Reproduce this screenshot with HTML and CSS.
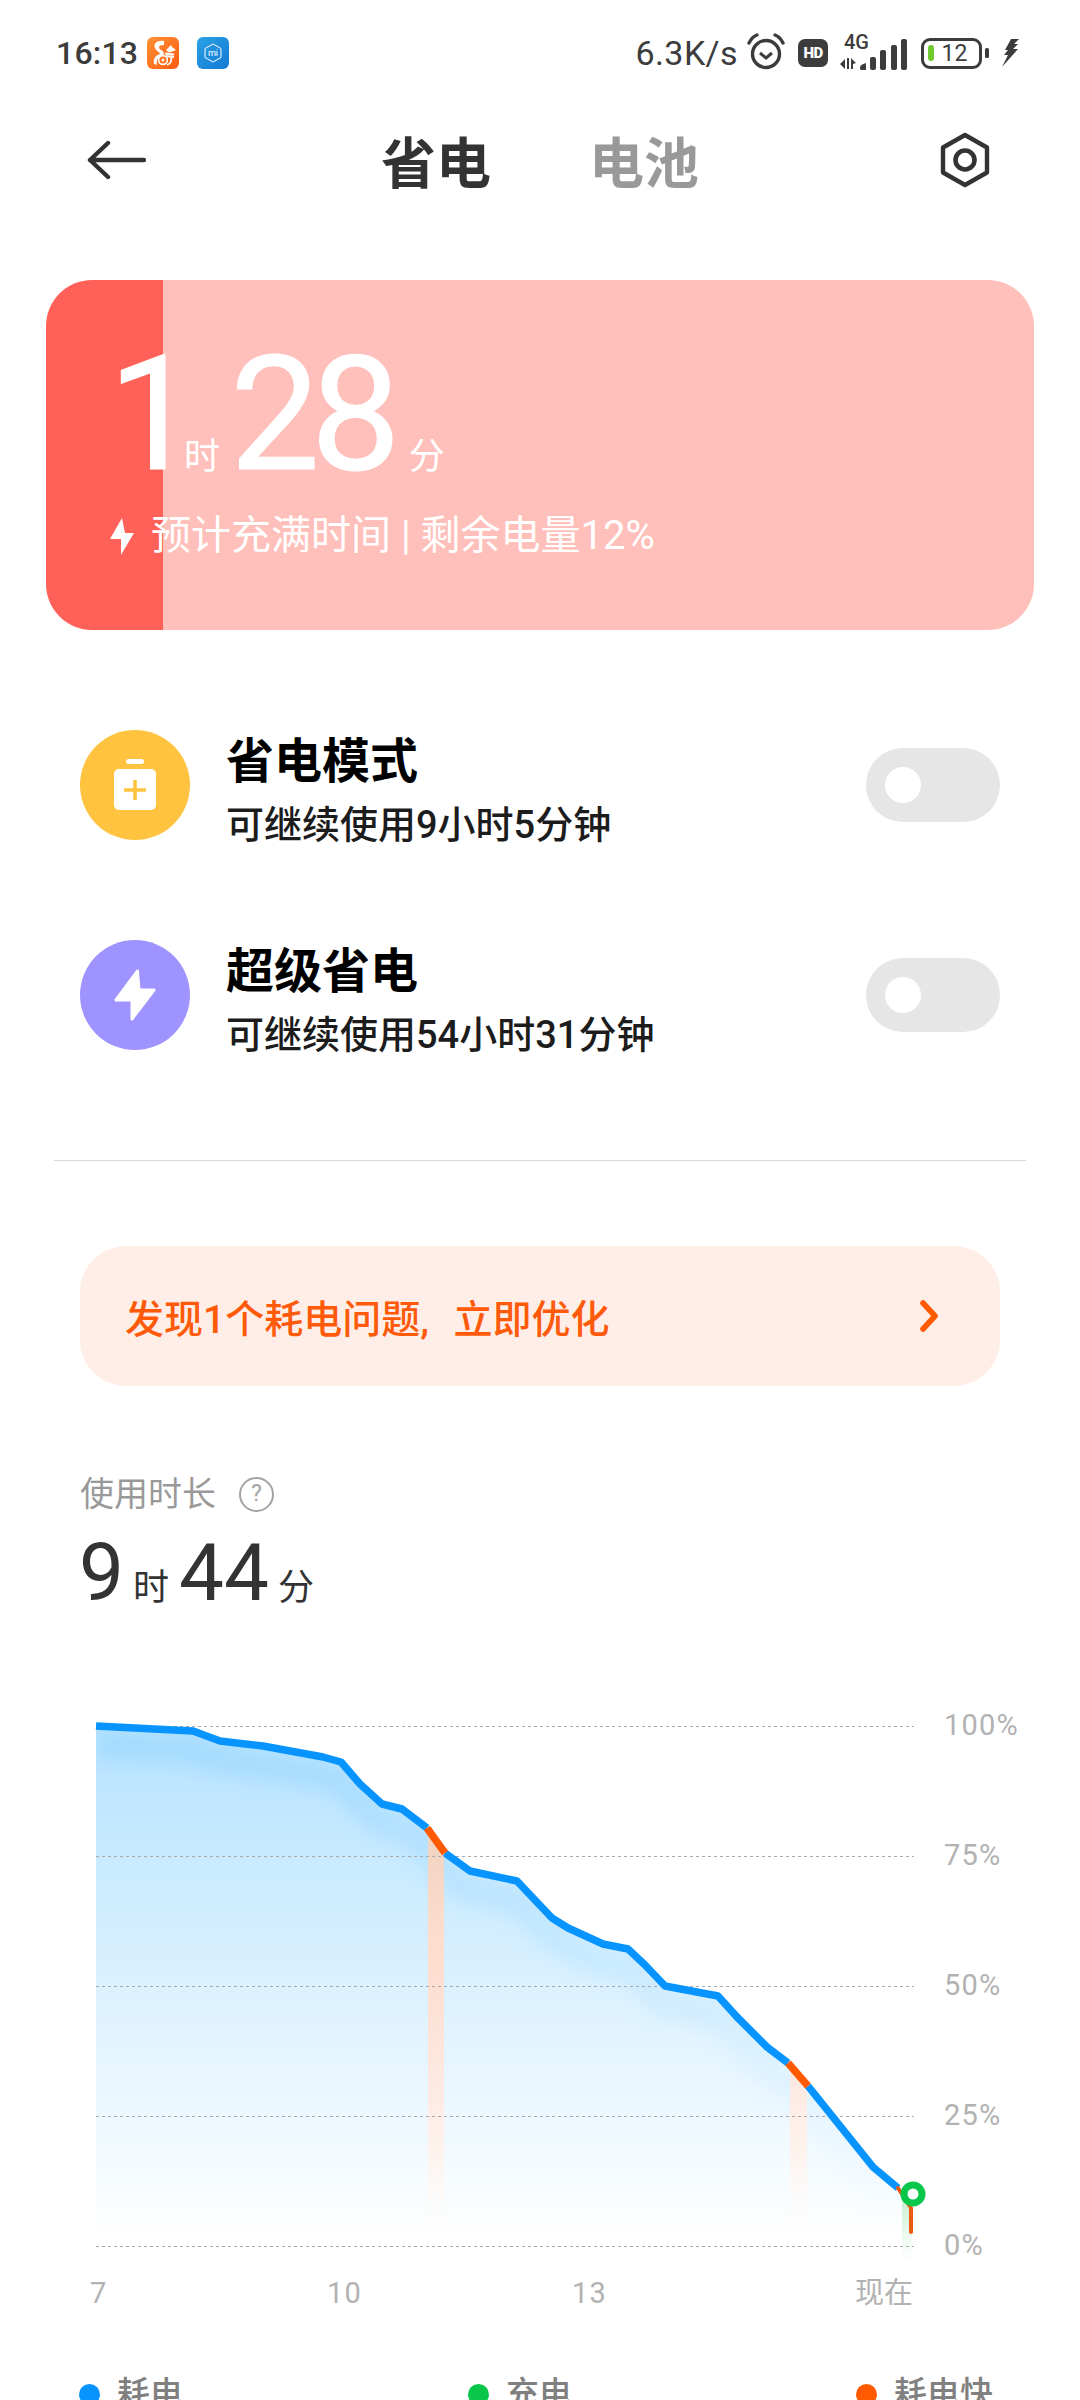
FILE: index.html
```html
<!DOCTYPE html>
<html lang="zh-CN">
<head>
<meta charset="utf-8">
<title>省电</title>
<link rel="stylesheet" href="styles.css">
</head>
<body>
<div class="status">
  <div class="status-left">
    <span class="clock">16:13</span>
    <svg class="app-icon" viewBox="0 0 32 32">
      <defs><linearGradient id="uc" x1="0" y1="0" x2="1" y2="1"><stop offset="0" stop-color="#ff9236"/><stop offset="1" stop-color="#ff5a10"/></linearGradient></defs>
      <rect width="32" height="32" rx="6" fill="url(#uc)"/>
      <path d="M17 4C10 3 6 7 8 11c1 3 5 4 5 6-4 1-7 4-6 10l3 1c-1-5 1-8 5-9 3-1 2-5-1-6-3-2-3-5 3-5z" fill="#fff"/>
      <circle cx="16" cy="23" r="4.4" fill="none" stroke="#fff" stroke-width="1.6"/>
      <circle cx="16" cy="23" r="1.5" fill="#fff"/>
      <path d="M19 13l5-5 1 2 4 3-5 2-2 .5z" fill="#fff"/>
      <path d="M18 16.5l9 1M19 19l8 1M20 28c4-1 5-5 4-8" fill="none" stroke="#fff" stroke-width="1.8"/>
    </svg>
    <svg class="app-icon app-gap" viewBox="0 0 32 32">
      <defs><linearGradient id="mi" x1="0" y1="0" x2="1" y2="1"><stop offset="0" stop-color="#29a2e4"/><stop offset="1" stop-color="#1478d4"/></linearGradient></defs>
      <rect width="32" height="32" rx="6" fill="url(#mi)"/>
      <polygon points="16,7 24,11.5 24,20.5 16,25 8,20.5 8,11.5" fill="none" stroke="#fff" stroke-width="1"/>
      <text class="mi-text" x="16" y="19">mi</text>
    </svg>
  </div>
  <div class="status-right">
    <span class="speed">6.3K/s</span>
    <svg class="alarm" width="40" height="38" viewBox="0 0 40 38">
      <circle cx="20" cy="21" r="13.5" fill="none" stroke="#3c3c3c" stroke-width="3.4"/>
      <path d="M14 20l6 5 6-5" fill="none" stroke="#3c3c3c" stroke-width="3"/>
      <path d="M3 10C5 6 8 3 11 2M37 10C35 6 32 3 29 2" fill="none" stroke="#3c3c3c" stroke-width="3.4" stroke-linecap="round"/>
    </svg>
    <span class="hd">HD</span>
    <span class="net">
      <span class="net-g">4G</span>
      <svg class="net-bars" width="67" height="31" viewBox="0 0 67 31">
        <path d="M0 25l5-5v10zM7 19h2v11H7zM11 19l5 5-3 1v5h-2z" fill="#3c3c3c"/>
        <path d="M20 29c0-3 3-4 6-5v7h-4c-1 0-2 0-2-2z" fill="#3c3c3c"/>
        <rect x="30" y="18" width="6" height="13" rx="2" fill="#3c3c3c"/>
        <rect x="40" y="11" width="6" height="20" rx="2" fill="#3c3c3c"/>
        <rect x="51" y="6" width="6" height="25" rx="2" fill="#3c3c3c"/>
        <rect x="61" y="0" width="6" height="31" rx="2" fill="#3c3c3c"/>
      </svg>
    </span>
    <span class="batt"><span class="batt-level"></span><span class="batt-num">12</span></span>
    <span class="batt-nub"></span>
    <svg class="charge" width="17" height="28" viewBox="0 0 17 28">
      <path d="M9 0h8l-5 5h4l-5 5h5L0 28l6-12H2l4-5H3z" fill="#3c3c3c"/>
    </svg>
  </div>
</div>

<div class="header">
  <svg class="back" width="60" height="40" viewBox="0 0 60 40"><path d="M21 3L3 20l18 17M3 20h54" fill="none" stroke="#333" stroke-width="4.4" stroke-linecap="round" stroke-linejoin="round"/></svg>
  <div class="tabs"><span class="tab tab-on">省电</span><span class="tab">电池</span></div>
  <svg class="gear" width="50" height="56" viewBox="0 0 50 56"><polygon points="25,3 47,15.5 47,40.5 25,53 3,40.5 3,15.5" fill="none" stroke="#333" stroke-width="4.4" stroke-linejoin="round"/><circle cx="25" cy="28" r="9.5" fill="none" stroke="#333" stroke-width="4.6"/></svg>
</div>

<section class="hero">
  <div class="hero-time">
    <span class="hero-num hero-one">1</span><span class="hero-unit">时</span><span class="hero-num">28</span><span class="hero-unit hero-unit-last">分</span>
  </div>
  <div class="hero-info">
    <svg width="24" height="37" viewBox="0 0 24 37"><polygon points="12,0 0,21 11,21 11,37 24,15 15,15" fill="#fff"/></svg>
    <span>预计充满时间 | 剩余电量12%</span>
  </div>
</section>

<section class="modes">
  <div class="mode">
    <div class="mode-icon mode-yellow">
      <svg width="110" height="110" viewBox="0 0 110 110">
        <rect x="46" y="29" width="18" height="5" rx="2.5" fill="#fff"/>
        <rect x="34" y="39" width="42" height="41" rx="5" fill="#fff"/>
        <path d="M55 50v20M44 60h22" stroke="#ffc340" stroke-width="3.6"/>
      </svg>
    </div>
    <div class="mode-text">
      <div class="mode-title">省电模式</div>
      <div class="mode-sub">可继续使用9小时5分钟</div>
    </div>
    <div class="toggle"><span class="knob"></span></div>
  </div>
  <div class="mode">
    <div class="mode-icon mode-purple">
      <svg width="110" height="110" viewBox="0 0 110 110">
        <polygon points="57.5,31 36,60 52,60 52,79 74,50 59,50" fill="#fff" stroke="#fff" stroke-width="3" stroke-linejoin="round"/>
      </svg>
    </div>
    <div class="mode-text">
      <div class="mode-title">超级省电</div>
      <div class="mode-sub">可继续使用54小时31分钟</div>
    </div>
    <div class="toggle"><span class="knob"></span></div>
  </div>
</section>

<div class="divider"></div>

<div class="banner">
  <span class="banner-text">发现1个耗电问题, 立即优化</span>
  <svg width="22" height="32" viewBox="0 0 22 32"><path d="M4 3l12 13L4 29" fill="none" stroke="#ff5a00" stroke-width="5.6" stroke-linecap="round" stroke-linejoin="round"/></svg>
</div>

<section class="usage">
  <div class="usage-label"><span>使用时长</span><span class="help">?</span></div>
  <div class="usage-time">
    <span class="usage-num">9</span><span class="usage-unit">时</span><span class="usage-num">44</span><span class="usage-unit">分</span>
  </div>
</section>

<svg class="chart" width="1080" height="640" viewBox="0 1700 1080 640">
  <defs>
    <linearGradient id="areaFill" gradientUnits="userSpaceOnUse" x1="0" y1="1726" x2="0" y2="2240">
      <stop offset="0" stop-color="#b6e3ff"/><stop offset="1" stop-color="#fff"/>
    </linearGradient>
    <linearGradient id="bandFill" gradientUnits="userSpaceOnUse" x1="0" y1="1726" x2="0" y2="2240">
      <stop offset="0" stop-color="#7ccbfb" stop-opacity=".38"/><stop offset="1" stop-color="#9ed8fd" stop-opacity="0"/>
    </linearGradient>
    <linearGradient id="peakFill" gradientUnits="userSpaceOnUse" x1="0" y1="1840" x2="0" y2="2240">
      <stop offset="0" stop-color="#f8d2bb" stop-opacity=".9"/>
      <stop offset=".25" stop-color="#ffdcca" stop-opacity=".95"/>
      <stop offset=".5" stop-color="#ffe3d7" stop-opacity=".95"/>
      <stop offset=".8" stop-color="#fff3ed" stop-opacity=".9"/>
      <stop offset="1" stop-color="#fff" stop-opacity="0"/>
    </linearGradient>
    <linearGradient id="chargeFill" gradientUnits="userSpaceOnUse" x1="0" y1="2200" x2="0" y2="2262">
      <stop offset="0" stop-color="#c4eecb" stop-opacity=".9"/><stop offset="1" stop-color="#d6f5dc" stop-opacity="0"/>
    </linearGradient>
    <clipPath id="areaClip">
      <path d="M96 1726L193 1731 220 1741 263 1746 323 1757 341 1762 360 1784 382 1804 402 1809 427 1828 445 1853 470 1871 517 1881 533 1898 552 1918 568 1928 603 1944 628 1949 645 1965 665 1986 718 1996 737 2017 767 2047 788 2063 808 2086 873 2167 898 2188 912 2208V2262H96Z"/>
    </clipPath>
    <filter id="blur" x="-10%" y="-10%" width="120%" height="120%"><feGaussianBlur stdDeviation="9"/></filter>
  </defs>

  <g clip-path="url(#areaClip)">
    <rect x="96" y="1720" width="820" height="545" fill="url(#areaFill)"/>
    <path d="M96 1746L193 1751 220 1761 263 1766 323 1777 341 1782 360 1804 382 1824 402 1829 427 1848 445 1873 470 1891 517 1901 533 1918 552 1938 568 1948 603 1964 628 1969 645 1985 665 2006 718 2016 737 2037 767 2067 788 2083 808 2106 873 2187 898 2208" fill="none" stroke="url(#bandFill)" stroke-width="28" filter="url(#blur)"/>
    <rect x="428" y="1826" width="16" height="420" fill="url(#peakFill)"/>
    <rect x="790" y="2062" width="17" height="180" fill="url(#peakFill)"/>
    <rect x="902" y="2200" width="10" height="62" fill="url(#chargeFill)"/>
  </g>
  <path class="grid-lines" d="M96 1726.5H914M96 1856.5H914M96 1986.5H914M96 2116.5H914M96 2246.5H914"/>

  <path class="curve" d="M96 1726L193 1731 220 1741 263 1746 323 1757 341 1762 360 1784 382 1804 402 1809 427 1828"/>
  <path class="curve" d="M445 1853L470 1871 517 1881 533 1898 552 1918 568 1928 603 1944 628 1949 645 1965 665 1986 718 1996 737 2017 767 2047 788 2063"/>
  <path class="curve" d="M808 2086L873 2167 898 2188"/>
  <path class="curve-hot" d="M427 1828L445 1853"/>
  <path class="curve-hot" d="M788 2063L808 2086"/>
  <path class="curve-hot curve-tail" d="M898 2188L911 2208V2232"/>
  <circle cx="913" cy="2194" r="9" fill="#fff" stroke="#08c74a" stroke-width="7"/>

  <text class="tick" x="944" y="1735">100%</text>
  <text class="tick" x="944" y="1865">75%</text>
  <text class="tick" x="944" y="1995">50%</text>
  <text class="tick" x="944" y="2125">25%</text>
  <text class="tick" x="944" y="2255">0%</text>
  <text class="tick" x="90" y="2303">7</text>
  <text class="tick" x="327" y="2303">10</text>
  <text class="tick" x="572" y="2303">13</text>
  <text class="tick tick-cjk" x="855" y="2303">现在</text>
</svg>

<div class="legend">
  <div class="legend-item"><span class="dot dot-blue"></span>耗电</div>
  <div class="legend-item"><span class="dot dot-green"></span>充电</div>
  <div class="legend-item"><span class="dot dot-orange"></span>耗电快</div>
</div>
</body>
</html>
```

FILE: styles.css
```css
* { box-sizing: border-box; }
html, body { margin: 0; padding: 0; }
body {
  width: 1080px;
  height: 2400px;
  overflow: hidden;
  background: #fff;
  color: #333;
  font-family: Roboto, "Noto Sans CJK SC", sans-serif;
}

/* status bar */
.status {
  height: 110px;
  padding: 33px 61px 0 56px;
  display: flex;
  justify-content: space-between;
  align-items: flex-start;
  color: #3c3c3c;
}
.status-left, .status-right { display: flex; align-items: center; height: 40px; }
.clock { font-size: 32px; font-weight: 500; width: 91px; line-height: 40px; letter-spacing: .2px; }
.app-icon { width: 32px; height: 32px; display: block; }
.app-gap { margin-left: 18px; }
.mi-text { font-size: 9px; fill: #fff; text-anchor: middle; font-family: Roboto, sans-serif; }
.speed { font-size: 34px; line-height: 40px; letter-spacing: .4px; margin-right: 8px; }
.alarm { display: block; margin-right: 12px; margin-top: -2px; }
.hd {
  width: 30px; height: 28px; border-radius: 7px; background: #3c3c3c; color: #fff;
  font-size: 15px; font-weight: 900; line-height: 28px; text-align: center; letter-spacing: -.5px;
  margin-right: 12px;
}
.net { position: relative; width: 67px; height: 34px; margin-right: 14px; }
.net-g { position: absolute; left: 4px; top: -4px; font-size: 20px; line-height: 20px; font-weight: 500; }
.net-bars { position: absolute; left: 0; top: 3px; }
.batt {
  width: 61px; height: 31px; border: 3.4px solid #3c3c3c; border-radius: 9px;
  display: flex; align-items: center; padding-left: 3.6px;
}
.batt-level { width: 6px; height: 16px; background: #6fca2d; border-radius: 3px; }
.batt-num { font-size: 23px; margin-left: 8px; line-height: 23px; }
.batt-nub { width: 4px; height: 10px; background: #3c3c3c; border-radius: 1.5px; margin-left: 3px; margin-right: 13px; }
.charge { display: block; }

/* header */
.header {
  height: 100px;
  padding: 0 90px;
  display: grid;
  grid-template-columns: 1fr auto 1fr;
  align-items: center;
}
.back { margin-left: -3px; }
.gear { justify-self: end; }
.tabs { display: flex; gap: 98px; padding-top: 7px; }
.tab { font-size: 55px; font-weight: 700; line-height: 70px; color: #999; }
.tab-on { color: #333; }

/* hero card */
.hero {
  margin: 70px 46px 0;
  height: 350px;
  border-radius: 46px;
  background: linear-gradient(90deg, #ff6058 117px, #ffbfba 117px);
  color: #fff;
  padding: 55px 0 0 62px;
}
.hero-time { display: flex; align-items: baseline; height: 176px; }
.hero-num { font-size: 160px; line-height: 160px; letter-spacing: -9px; -webkit-text-stroke: 1px #fff; }
.hero-one { letter-spacing: -14px; }
.hero-unit { font-size: 36px; line-height: 36px; margin-right: 10px; }
.hero-unit-last { margin-left: 17px; }
.hero-info { display: flex; align-items: center; gap: 17px; font-size: 40px; line-height: 50px; margin-left: 2px; }

/* mode rows */
.modes { margin-top: 100px; padding: 0 80px; display: flex; flex-direction: column; gap: 100px; }
.mode { height: 110px; display: flex; align-items: center; }
.mode-icon { width: 110px; height: 110px; border-radius: 50%; flex: none; }
.mode-icon svg { display: block; }
.mode-yellow { background: #ffc340; }
.mode-purple { background: #9f94ff; }
.mode-text { margin-left: 36px; align-self: flex-start; padding-top: 3px; }
.mode-title { font-size: 48px; line-height: 58px; font-weight: 700; color: #000; }
.mode-sub { font-size: 38px; line-height: 50px; margin-top: 9px; color: #1c1c1c; font-weight: 500; }
.toggle { margin-left: auto; width: 134px; height: 74px; border-radius: 37px; background: #e6e6e6; display: flex; align-items: center; padding-left: 19px; }
.knob { width: 36px; height: 36px; border-radius: 50%; background: #fff; }

.divider { margin: 110px 54px 0; height: 1px; background: #d9d9d9; }

/* banner */
.banner {
  margin: 85px 80px 0;
  height: 140px;
  border-radius: 46px;
  background: #ffeee7;
  padding: 0 59px 0 45px;
  display: flex;
  align-items: center;
  justify-content: space-between;
  color: #ff5a0a;
  font-size: 39px;
  font-weight: 500;
}
.banner-text { word-spacing: 15px; }
.banner svg { display: block; }

/* usage */
.usage { margin-top: 86px; height: 228px; padding-left: 80px; }
.usage-label { display: flex; align-items: center; gap: 23px; font-size: 34px; line-height: 44px; color: #999; }
.help {
  width: 35px; height: 35px; border-radius: 50%; border: 2.5px solid #a3a3a3;
  font-size: 23px; line-height: 30px; text-align: center; color: #a3a3a3;
}
.usage-time { display: flex; align-items: baseline; margin-top: 12px; margin-left: -1px; }
.usage-num { font-size: 80px; line-height: 90px; color: #333; }
.usage-unit { font-size: 36px; line-height: 40px; margin: 0 10px 0 9px; color: #333; }

/* chart */
.chart { display: block; }
.grid-lines { fill: none; stroke: #aaa; stroke-width: 1; stroke-dasharray: 3 3; }
.curve, .curve-hot { fill: none; stroke-width: 7.5; stroke-linejoin: round; }
.curve { stroke: #0894ff; }
.curve-hot { stroke: #ff5a00; }
.curve-tail { stroke-width: 4; stroke: #ec5a13; stroke-linecap: round; }
.tick { font-size: 29px; fill: #b2b2b2; letter-spacing: 1.2px; font-family: Roboto, "Noto Sans CJK SC", sans-serif; }
.tick-cjk { letter-spacing: 0; }

/* legend */
.legend {
  margin-top: 34px;
  padding-left: 79px;
  display: grid;
  grid-template-columns: 389px 388px auto;
  font-size: 33px;
  font-weight: 500;
  line-height: 40px;
  color: #808080;
}
.legend-item { display: flex; align-items: center; gap: 17px; }
.dot { width: 21px; height: 21px; border-radius: 50%; }
.dot-blue { background: #0894ff; }
.dot-green { background: #08c74a; }
.dot-orange { background: #ff5a00; }
```
